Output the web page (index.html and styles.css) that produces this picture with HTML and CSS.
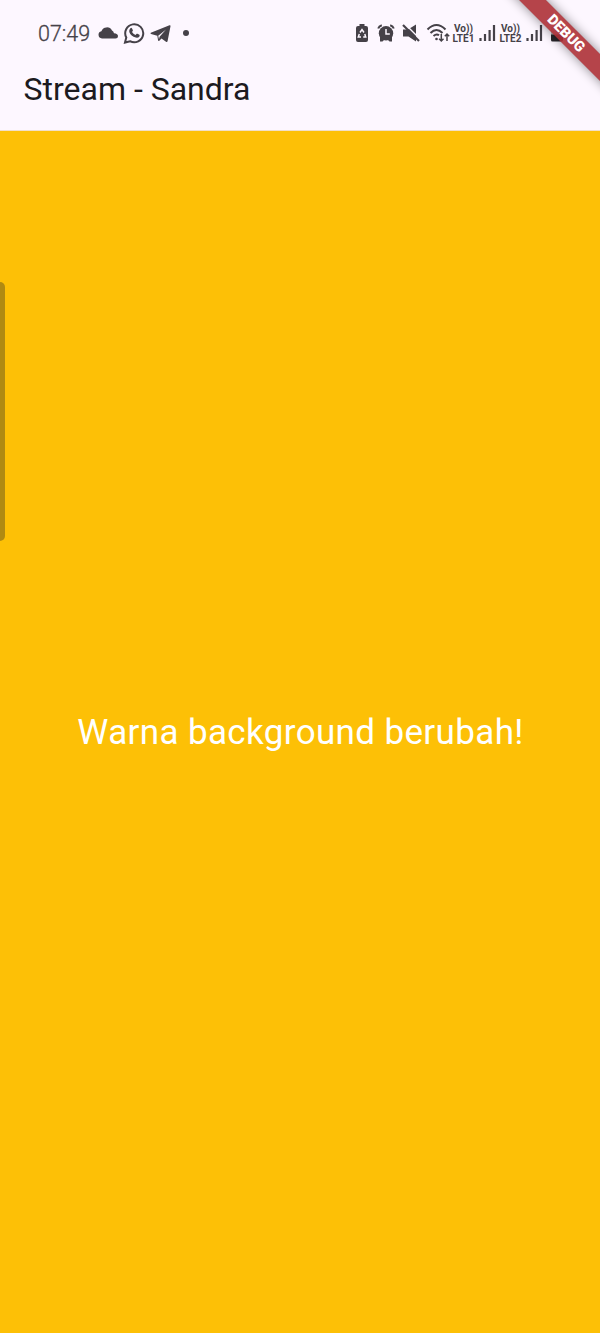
FILE: index.html
```html
<!DOCTYPE html>
<html lang="id">
<head>
<meta charset="utf-8">
<title>Stream - Sandra</title>
<link rel="stylesheet" href="styles.css">
</head>
<body>
<div class="screen">
  <header class="top">
    <div class="status">
      <div class="group left">
        <span class="clock">07:49</span>
        <svg class="cloud" width="20" height="24" viewBox="0 0 20 24"><path d="M4 17.500a3.700 3.700 0 0 1-.6-7.300A5.800 5.800 0 0 1 14 9.500Q15.500 10 16 12.200Q20 12.500 20 15.200Q20 17.500 17.500 17.500z"/></svg>
        <svg width="22" height="24" viewBox="0 0 22 24"><path class="line" d="M2 21.500l1.300-5A9 9 0 1 1 7 20.200z"/><path d="M7.400 7.200q.8-.8 1.500 0l1 2q.2.500-.9 1.800 1.200 2.200 3.500 3.100l1.200-1.300q.4-.3.800 0l1.900 1q.6.400 0 1.700-1.200 1.700-3.600 1.100-5-1.600-6.500-5.700-.5-2.200 1.100-3.700z"/></svg>
        <svg width="22" height="24" viewBox="0 0 22 24"><path d="M.8 11.800 19.500 4.200Q20.700 3.900 20.500 5.200L17.600 20Q17.300 21.500 16 20.700L11.500 17.500 9.300 19.800Q8.300 20.600 8 19L7.300 14.700 1 13Q0 12.400.8 11.800z"/><path class="cut" d="M8.200 14.800 16 8.500 9.600 15.800 9 18.200z"/></svg>
        <i class="dot"></i>
      </div>
      <div class="group right">
        <svg width="14" height="24" viewBox="0 0 14 24"><path d="M4.500 3h5v2h1.500a2 2 0 0 1 2 2v12a2 2 0 0 1-2 2H3a2 2 0 0 1-2-2V7a2 2 0 0 1 2-2h1.500z"/><path class="hole" d="M5 11.500 7 8.500l2 3M9.800 13l.9 3H8.200M6 16H3.300l1-3"/></svg>
        <svg width="18" height="24" viewBox="0 0 18 24"><path class="line" d="M1.200 7.500Q2 5 4.800 4.200M16.800 7.500Q16 5 13.200 4.200"/><circle cx="9" cy="12.300" r="7.200"/><path d="M3 15v5.500h2.500l2-2zM15 15v5.500h-2.500l-2-2z"/><path class="hole" d="M9 8v5h3.800"/></svg>
        <svg class="mute" width="18" height="24" viewBox="0 0 18 24"><path d="M1 8.500h5L14 3.500v17L6.500 15.500H1z"/><path class="gap" d="M2.500 2.500l16 16"/><path class="slash" d="M1 4l16 16"/></svg>
        <svg class="wifi" width="24" height="24" viewBox="0 0 24 24"><path class="line" d="M1.500 8.500Q10.500-.5 19.500 8.500M4.500 12q6-6 12 0M7.500 15q3-2.500 5.500-.7"/><circle cx="10.500" cy="18" r="1.300"/><path class="thin" d="M15.300 13v7m-2.200-2.200 2.200 2.200 2.200-2.200M21 20v-7m-2.200 2.200 2.200-2.200 2.200 2.200"/></svg>
        <span class="volte"><span>Vo))</span><span>LTE1</span></span>
        <svg width="17" height="24" viewBox="0 0 17 24"><path class="bars" d="M1.500 20v-3M6 20v-7M10.600 20V9M15 20V4"/></svg>
        <span class="volte"><span>Vo))</span><span>LTE2</span></span>
        <svg width="17" height="24" viewBox="0 0 17 24"><path class="bars" d="M1.500 20v-3M6 20v-7M10.600 20V9M15 20V4"/></svg>
        <svg class="battery" width="12" height="24" viewBox="0 0 12 24"><path fill-opacity=".35" d="M4 4h4v2h4v9H0V6h4z"/><path class="charge" d="M0 13.500h12V19q0 1.500-1.500 1.500h-9Q0 20.500 0 19z"/></svg>
      </div>
    </div>
    <h1>Stream - Sandra</h1>
  </header>
  <main class="body"><p>Warna background berubah!</p></main>
  <div class="edge"></div>
  <div class="banner">DEBUG</div>
</div>
</body>
</html>
```
FILE: styles.css
```css
* { box-sizing: border-box; }
body { margin: 0; font-family: Roboto, sans-serif; }
.screen {
  position: relative;
  display: flex;
  flex-direction: column;
  height: 1333px;
  overflow: hidden;
  background: #fdc006;
}
.top {
  height: 131px;
  flex: none;
  background: #fdf7ff;
  border-bottom: 1px solid #f1dfc9;
}
.status {
  display: flex;
  justify-content: space-between;
  padding: 21px 37px 0 38px;
  height: 65px;
  color: #454148;
}
.group { display: flex; align-items: center; height: 24px; }
.group svg { display: block; flex: none; fill: #454148; }
.left { gap: 5px; }
.clock {
  width: 55px;
  padding-top: 1px;
  font-size: 21.500px;
  line-height: 24px;
  font-weight: 300;
  -webkit-text-stroke: .3px #454148;
}
.dot { width: 6px; height: 6px; margin-left: 6px; border-radius: 50%; background: #454148; }
.right > * { margin-left: 8px; }
.right > .mute { margin-left: 7px; }
.right > .wifi { margin-left: 6px; }
.right > .volte { margin-left: 2px; }
.right > .volte + svg { margin-left: 4px; }
.right > svg:not(.wifi) + .volte { margin-left: 3px; }
.group .line { fill: none; stroke: #454148; stroke-width: 2; }
.group .slash { fill: none; stroke: #454148; stroke-width: 2.200; }
.group .thin { fill: none; stroke: #454148; stroke-width: 1.500; }
.group .bars { fill: none; stroke: #454148; stroke-width: 2.200; }
.group .hole { fill: none; stroke: #fdf7ff; stroke-width: 1.500; }
.group .gap { fill: none; stroke: #fdf7ff; stroke-width: 1.500; }
.group .cut { fill: #fdf7ff; }
.group .charge { fill: #29262b; }
.volte {
  display: flex;
  flex-direction: column;
  align-items: center;
  width: 23px;
  padding-top: 1px;
  font-size: 10px;
  line-height: 10px;
  font-weight: 700;
  white-space: nowrap;
}
h1 {
  margin: 0;
  padding-left: 23.500px;
  font-size: 32px;
  line-height: 48px;
  font-weight: 400;
  color: #1c1a20;
}
.body {
  flex: 1;
  display: flex;
  align-items: center;
  justify-content: center;
}
.body p {
  margin: 0;
  padding: 2px 0 0 1px;
  font-size: 35px;
  line-height: 50px;
  letter-spacing: .36px;
  color: #fff;
  white-space: nowrap;
}
.edge {
  position: absolute;
  left: 0;
  top: 282px;
  width: 5px;
  height: 259px;
  border-radius: 0 5px 5px 0;
  background: #b08a12;
}
.banner {
  position: absolute;
  left: 466px;
  top: 24px;
  width: 200px;
  height: 19px;
  transform: rotate(45deg);
  background: rgba(173, 48, 54, .9);
  box-shadow: 0 0 11px rgba(0, 0, 0, .45);
  color: #fff;
  text-align: center;
  font-size: 14.500px;
  line-height: 20px;
  font-weight: 900;
}
```
